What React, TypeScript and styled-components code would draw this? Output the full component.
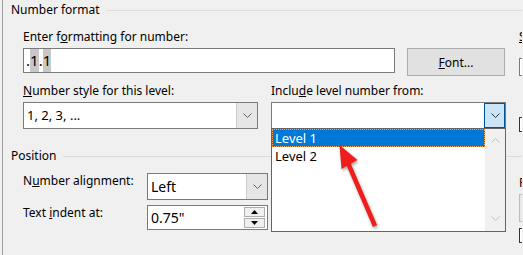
import React from 'react'
import styled, { createGlobalStyle } from 'styled-components'

const GlobalStyle = createGlobalStyle`
  html, body {
    margin: 0;
    padding: 0;
    background: #f0f0f0;
    overflow: hidden;
  }
  body {
    font-family: "Noto Sans", "Open Sans", sans-serif;
    font-size: 12px;
    color: #000;
  }
`

function Chevron({ up = false, color = '#606060' }: { up?: boolean; color?: string }) {
  return (
    <svg width="9" height="5" viewBox="0 0 9 5">
      <polyline
        points={up ? '0.5,4.5 4.5,0.5 8.5,4.5' : '0.5,0.5 4.5,4.5 8.5,0.5'}
        fill="none"
        stroke={color}
        strokeWidth="1"
      />
    </svg>
  )
}

function Triangle({ up = false }: { up?: boolean }) {
  return (
    <svg width="7" height="4" viewBox="0 0 7 4">
      <polygon points={up ? '0,4 3.5,0 7,4' : '0,0 3.5,4 7,0'} fill="#000" />
    </svg>
  )
}

function RedArrow() {
  return (
    <ArrowSvg width="523" height="255" viewBox="0 0 523 255">
      <line x1="375" y1="226" x2="348" y2="163" stroke="#f01d1d" strokeWidth="4.5" strokeLinecap="butt" />
      <polygon points="339.5,145 357.5,160 341.5,169" fill="#f01d1d" />
    </ArrowSvg>
  )
}

function App() {
  return (
    <>
      <GlobalStyle />
      <Dialog>
        <GroupHeader>Number format</GroupHeader>
        <GroupBody>
          <MainCol $width={483}>
            <Label $top={11}>
              Enter f<u>o</u>rmatting for number:
            </Label>
            <InputRow>
              <TextInput>
                .<Field>1</Field>.<Field>1</Field>
              </TextInput>
              <FontButton>
                <u>F</u>ont...
              </FontButton>
            </InputRow>
            <SelectGrid>
              <Label $top={7}>
                <u>N</u>umber style for this level:
              </Label>
              <Label $top={7}>
                Inclu<u>d</u>e level number from:
              </Label>
              <Select>
                <SelectText $size={13}>1, 2, 3, ...</SelectText>
                <DropButton>
                  <Chevron />
                </DropButton>
              </Select>
              <ComboWrap>
                <Select>
                  <SelectText $size={13} />
                  <DropButton $active>
                    <Chevron color="#333" />
                  </DropButton>
                </Select>
                <ListBox>
                  <Items>
                    <Item $selected>Level 1</Item>
                    <Item>Level 2</Item>
                  </Items>
                  <ScrollBar>
                    <Chevron up color="#c2c2c2" />
                    <Chevron color="#c2c2c2" />
                  </ScrollBar>
                </ListBox>
              </ComboWrap>
            </SelectGrid>
          </MainCol>
          <SideCol>
            <Label $top={11}>
              <u>S</u>tart at:
            </Label>
            <SideSpin />
            <CheckBox $top={41} />
          </SideCol>
        </GroupBody>

        <GroupHeader $top={16}>Position</GroupHeader>
        <GroupBody>
          <MainCol $width={483}>
            <FormRow $top={9}>
              <RowLabel>
                N<u>u</u>mber alignment:
              </RowLabel>
              <Select $width={121}>
                <SelectText $size={14}>Left</SelectText>
                <DropButton>
                  <Chevron />
                </DropButton>
              </Select>
            </FormRow>
            <FormRow $top={5}>
              <RowLabel>
                Text <u>i</u>ndent at:
              </RowLabel>
              <SpinBox>
                <SelectText $size={14}>0.75"</SelectText>
                <SpinButtons>
                  <SpinButton>
                    <Triangle up />
                  </SpinButton>
                  <SpinButton>
                    <Triangle />
                  </SpinButton>
                </SpinButtons>
              </SpinBox>
            </FormRow>
          </MainCol>
          <SideCol>
            <Label $top={11}>Follow number with:</Label>
            <SideSelect />
            <CheckBox $top={6} />
          </SideCol>
        </GroupBody>
        <RedArrow />
      </Dialog>
    </>
  )
}

const Dialog = styled.div`
  position: relative;
  width: 520px;
  height: 255px;
  margin-left: 2px;
  padding-top: 2px;
  box-sizing: border-box;
  border-left: 1px solid #a0a0a0;
  overflow: hidden;
`

const GroupHeader = styled.div<{ $top?: number }>`
  display: flex;
  align-items: center;
  height: 16px;
  line-height: 16px;
  margin-top: ${(p) => p.$top ?? 0}px;
  padding-left: 8px;
  white-space: nowrap;

  &::after {
    content: '';
    flex: 1;
    height: 1px;
    margin-left: 7px;
    background: #dcdcdc;
  }
`

const GroupBody = styled.div`
  display: flex;
  gap: 13px;
  padding-left: 20px;
`

const MainCol = styled.div<{ $width: number }>`
  display: flex;
  flex-direction: column;
  flex: none;
  width: ${(p) => p.$width}px;
`

const SideCol = styled.div`
  display: flex;
  flex-direction: column;
  flex: none;
  width: 120px;
`

const Label = styled.div<{ $top?: number }>`
  line-height: 16px;
  height: 16px;
  margin-top: ${(p) => p.$top ?? 0}px;
  white-space: nowrap;
`

const InputRow = styled.div`
  display: flex;
  align-items: flex-start;
  gap: 12px;
  margin-top: 3px;
`

const TextInput = styled.div`
  box-sizing: border-box;
  width: 372px;
  height: 25px;
  padding: 0 2px;
  background: #fff;
  border: 1px solid #7a7a7a;
  font-size: 15px;
  line-height: 23px;
`

const Field = styled.span`
  background: #c8c8c8;
  padding: 1px 0 2px;
`

const FontButton = styled.div`
  box-sizing: border-box;
  width: 98px;
  height: 28px;
  display: flex;
  align-items: center;
  justify-content: center;
  background: #e1e1e1;
  border: 1px solid #adadad;
`

const SelectGrid = styled.div`
  display: grid;
  grid-template-columns: 235px 235px;
  column-gap: 13px;
  row-gap: 3px;
  align-items: start;

  & > div:nth-child(-n + 2) {
    margin-top: 7px;
  }
`

const Select = styled.div<{ $width?: number }>`
  box-sizing: border-box;
  display: flex;
  width: ${(p) => (p.$width ? `${p.$width}px` : '100%')};
  height: 27px;
  background: #fff;
  border: 1px solid #7a7a7a;
`

const SelectText = styled.div<{ $size: number }>`
  flex: 1;
  padding-left: 3px;
  font-size: ${(p) => p.$size}px;
  line-height: 25px;
  white-space: nowrap;
`

const DropButton = styled.div<{ $active?: boolean }>`
  box-sizing: border-box;
  width: 21px;
  display: flex;
  align-items: center;
  justify-content: center;
  background: ${(p) => (p.$active ? '#cce4f7' : '#e6e6e6')};
  border-left: 1px solid ${(p) => (p.$active ? '#005499' : '#cccccc')};
  ${(p) => (p.$active ? 'outline: 1px solid #005499; outline-offset: -1px;' : '')}
`

const ComboWrap = styled.div`
  position: relative;
`

const ListBox = styled.div`
  position: absolute;
  left: 0;
  top: 26px;
  z-index: 2;
  box-sizing: border-box;
  width: 235px;
  height: 104px;
  display: flex;
  background: #fff;
  border: 1px solid #646464;
`

const Items = styled.div`
  flex: 1;
  display: flex;
  flex-direction: column;
`

const Item = styled.div<{ $selected?: boolean }>`
  box-sizing: border-box;
  height: 18px;
  padding-left: 2px;
  font-size: 13px;
  line-height: 16px;
  color: ${(p) => (p.$selected ? '#fff' : '#000')};
  background: ${(p) => (p.$selected ? '#0078d7' : 'transparent')};
  border: 1px ${(p) => (p.$selected ? 'dotted #f3a35a' : 'solid transparent')};
`

const ScrollBar = styled.div`
  width: 20px;
  display: flex;
  flex-direction: column;
  align-items: center;
  justify-content: space-between;
  padding: 9px 0 10px;
  box-sizing: border-box;
  background: #f0f0f0;
`

const FormRow = styled.div<{ $top: number }>`
  display: flex;
  align-items: flex-start;
  margin-top: ${(p) => p.$top}px;
`

const RowLabel = styled.div`
  width: 124px;
  flex: none;
  line-height: 16px;
  white-space: nowrap;
`

const SpinBox = styled.div`
  box-sizing: border-box;
  display: flex;
  width: 121px;
  height: 25px;
  background: #fff;
  border: 1px solid #7a7a7a;

  & > div:first-child {
    line-height: 23px;
  }
`

const SpinButtons = styled.div`
  display: flex;
  flex-direction: column;
  gap: 1px;
  width: 21px;
  padding: 1px 2px 1px 0;
`

const SpinButton = styled.div`
  flex: 1;
  display: flex;
  align-items: center;
  justify-content: center;
  background: #f0f0f0;
  border: 1px solid #adadad;
`

const SideSpin = styled.div`
  box-sizing: border-box;
  width: 60px;
  height: 18px;
  margin-top: 13px;
  background: #fff;
  border: 1px solid #7a7a7a;
`

const SideSelect = styled.div`
  box-sizing: border-box;
  width: 120px;
  height: 28px;
  margin-top: 3px;
  background: #e8e8e8;
  border: 1px solid #bcbcbc;
`

const CheckBox = styled.div<{ $top: number }>`
  box-sizing: border-box;
  width: 14px;
  height: 15px;
  margin-top: ${(p) => p.$top}px;
  background: #fff;
  border: 1px solid #333;
`

const ArrowSvg = styled.svg`
  position: absolute;
  left: -3px;
  top: 0;
  z-index: 3;
  pointer-events: none;
  filter: drop-shadow(1px 2px 1.5px rgba(0, 0, 0, 0.35));
`

export default App
